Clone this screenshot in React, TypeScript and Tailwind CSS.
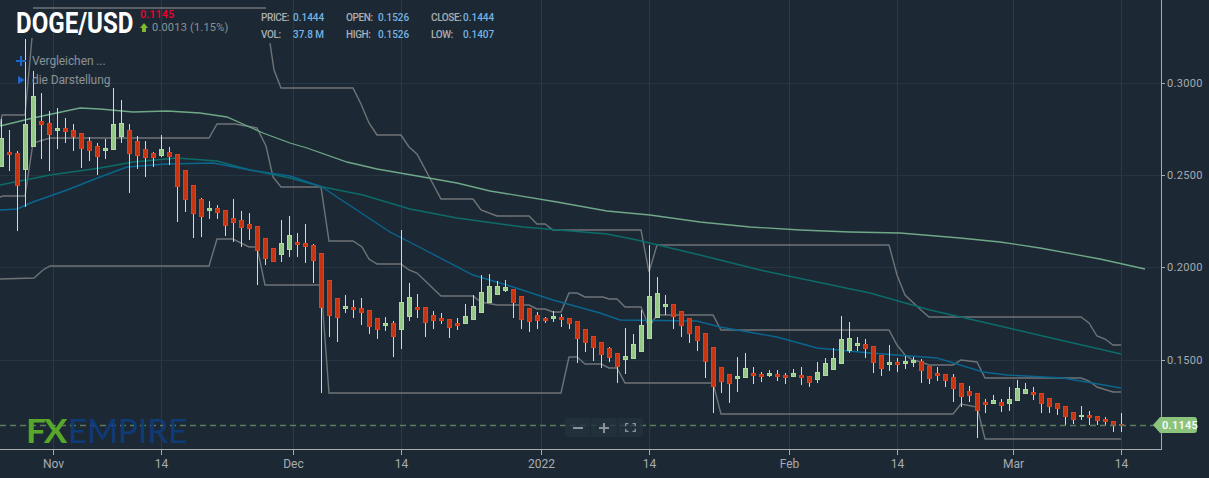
import { Fragment } from 'react';

// [high, bodyTop, bodyBottom, low, green?]
type Candle = [number, number, number, number, number];

const candles: Candle[] = [
  [119, 138, 167, 167, 1], [130, 152, 155, 171, 0], [151, 153, 186, 231, 0], [39, 124, 170, 207, 1],
  [71, 96, 147, 147, 1], [93, 121, 125, 159, 0], [111, 123, 135, 171, 0], [108, 128, 131, 149, 1],
  [118, 128, 132, 143, 0], [124, 130, 137, 151, 0], [133, 133, 149, 168, 0], [137, 141, 151, 161, 0],
  [143, 146, 157, 175, 0], [139, 148, 151, 159, 1], [88, 124, 150, 150, 1], [100, 123, 137, 143, 1],
  [124, 130, 154, 193, 0], [136, 141, 156, 169, 0], [141, 149, 158, 177, 0], [152, 153, 158, 167, 0],
  [135, 149, 156, 157, 1], [147, 152, 157, 165, 0], [154, 154, 187, 222, 0], [170, 170, 200, 212, 0],
  [185, 185, 214, 238, 0], [198, 199, 217, 237, 0], [201, 208, 211, 219, 1], [205, 208, 213, 219, 0],
  [210, 210, 226, 236, 0], [199, 218, 223, 242, 0], [211, 220, 228, 247, 0], [213, 224, 229, 240, 0],
  [226, 226, 251, 285, 0], [238, 238, 259, 265, 0], [248, 248, 262, 262, 0], [220, 243, 255, 262, 1],
  [216, 235, 250, 257, 1], [233, 242, 245, 257, 0], [224, 243, 247, 263, 0], [244, 245, 261, 283, 0],
  [253, 253, 308, 393, 0], [280, 280, 316, 337, 0], [298, 298, 318, 342, 0], [295, 306, 309, 313, 1],
  [300, 307, 310, 318, 0], [298, 308, 313, 325, 0], [310, 310, 327, 334, 0], [318, 318, 330, 339, 0],
  [317, 323, 326, 331, 1], [321, 323, 337, 357, 0], [230, 302, 330, 349, 1], [283, 297, 317, 321, 1],
  [294, 307, 310, 318, 0], [307, 307, 323, 337, 0], [311, 315, 321, 329, 0], [313, 318, 321, 324, 0],
  [319, 319, 328, 338, 0], [318, 323, 326, 330, 0], [304, 316, 324, 324, 1], [295, 306, 320, 320, 1],
  [275, 292, 313, 313, 1], [274, 286, 303, 303, 1], [281, 286, 295, 295, 1], [280, 287, 291, 292, 1],
  [289, 289, 303, 318, 0], [296, 296, 320, 329, 0], [308, 308, 322, 332, 0], [312, 315, 321, 329, 0],
  [317, 318, 321, 323, 0], [311, 316, 319, 322, 1], [314, 317, 320, 327, 0], [318, 318, 324, 329, 0],
  [321, 321, 339, 363, 0], [329, 329, 343, 352, 0], [336, 336, 348, 361, 0], [342, 342, 355, 368, 0],
  [347, 348, 358, 362, 0], [353, 353, 367, 383, 0], [328, 356, 360, 374, 1], [334, 344, 359, 359, 1],
  [310, 325, 352, 352, 1], [245, 296, 339, 339, 1], [277, 293, 318, 318, 1], [295, 304, 307, 315, 1],
  [304, 304, 317, 329, 0], [311, 311, 326, 337, 0], [318, 318, 334, 343, 0], [326, 326, 341, 351, 0],
  [333, 333, 362, 378, 0], [347, 347, 387, 413, 0], [367, 367, 382, 393, 0], [374, 374, 384, 403, 0],
  [357, 376, 379, 392, 1], [353, 368, 378, 378, 1], [367, 373, 376, 384, 0], [372, 374, 377, 382, 0],
  [370, 373, 376, 377, 1], [370, 374, 377, 381, 0], [373, 375, 378, 384, 0], [369, 373, 377, 377, 1],
  [367, 375, 378, 385, 0], [376, 376, 383, 387, 0], [362, 372, 380, 383, 1], [358, 363, 376, 376, 1],
  [348, 358, 370, 370, 1], [316, 339, 364, 364, 1], [322, 338, 351, 353, 1], [337, 343, 346, 351, 1],
  [339, 344, 349, 358, 0], [346, 346, 363, 373, 0], [355, 355, 369, 376, 0], [345, 362, 365, 371, 1],
  [358, 362, 365, 372, 0], [356, 361, 364, 369, 1], [357, 360, 363, 367, 1], [359, 361, 371, 383, 0],
  [366, 366, 379, 384, 0], [367, 373, 376, 381, 0], [374, 374, 381, 387, 0], [374, 377, 389, 402, 0],
  [383, 383, 397, 407, 0], [386, 391, 396, 402, 0], [393, 393, 411, 438, 0], [399, 402, 405, 413, 0],
  [395, 400, 404, 404, 1], [399, 402, 406, 412, 0], [387, 399, 404, 411, 1], [380, 388, 401, 401, 1],
  [383, 389, 394, 394, 1], [387, 392, 395, 400, 0], [393, 393, 404, 413, 0], [398, 398, 407, 413, 0],
  [403, 403, 409, 415, 0], [406, 406, 417, 426, 0], [412, 412, 420, 424, 0], [406, 415, 417, 420, 1],
  [411, 415, 418, 425, 0], [416, 416, 421, 425, 0], [417, 419, 422, 425, 0], [421, 421, 426, 432, 0],
  [413, 424, 426, 432, 0],
];

const grayLines = [
  '0,126 2,115 25,115 32,38',
  '0,197 3,196 25,196 33,143 50,138 209,138 217,124 235,124 257,128 266,146 273,177 281,187 321,187 329,241 353,241 362,247 369,259 377,264 401,264 409,270 417,273 441,296 473,296 481,302 497,305 529,305 537,309 545,309 553,312 561,312 569,293 577,293 585,297 603,297 609,299 617,299 625,307 641,307 649,327 657,315 713,315 721,330 889,330 897,345 905,355 913,360 921,362 929,365 953,365 961,360 977,362 985,378 1081,378 1089,381 1097,387 1113,392 1121,392',
  '0,279 34,278 43,270 50,266 209,266 217,239 233,239 249,247 257,247 265,285 321,285 329,393 561,393 569,357 577,357 585,364 601,364 609,368 617,368 625,383 713,383 721,414 953,414 961,404 977,407 985,439 1121,439',
  '33,8 266,8',
  '270,43 274,70 281,88 353,88 361,104 369,123 377,135 401,135 409,147 417,154 441,199 473,199 481,210 497,216 529,216 537,224 545,224 553,230 641,230 649,272 657,245 889,245 897,275 905,295 921,310 929,317 1081,317 1089,323 1097,336 1105,339 1113,345 1121,345',
];

const lightGreen = '0,126 33,118 80,108 100,109 133,112 167,111 200,113 227,117 263,133 290,143 307,148 347,162 377,169 423,177 457,183 490,191 557,202 607,211 650,215 700,222 750,227 800,230 850,232 900,233 960,238 1000,242 1040,248 1100,259 1145,269';
const teal = '0,185 50,175 100,168 133,162 177,158 217,161 250,170 290,178 323,187 363,195 410,209 457,218 523,227 607,234 637,240 700,255 760,270 870,293 930,310 1000,326 1060,340 1121,354';
const blue = '0,210 17,209 33,202 67,190 100,177 127,167 167,164 213,163 250,170 290,176 322,187 340,199 390,232 423,249 473,275 513,287 553,300 600,313 620,320 697,321 720,327 777,337 817,348 870,353 937,358 983,372 1007,375 1063,378 1121,388';

const gridX = [53, 161, 293, 401, 541, 649, 789, 897, 1013, 1121];
const gridY = [83, 175, 267, 360];
const dates: [number, string][] = [
  [53, 'Nov'], [161, '14'], [293, 'Dec'], [401, '14'], [541, '2022'], [649, '14'],
  [789, 'Feb'], [897, '14'], [1013, 'Mar'], [1121, '14'],
];
const prices: [number, string][] = [[83, '0.3000'], [175, '0.2500'], [267, '0.2000'], [360, '0.1500']];

const stats = [
  ['PRICE:', '0.1444', 'OPEN:', '0.1526', 'CLOSE:', '0.1444'],
  ['VOL:', '37.8 M', 'HIGH:', '0.1526', 'LOW:', '0.1407'],
];

function Chart() {
  return (
    <svg viewBox="0 0 1209 478" className="block w-[1209px] h-[478px]">
      {gridX.map(x => <line key={x} x1={x + 0.5} x2={x + 0.5} y1={0} y2={449} stroke="#2a3a46" />)}
      {gridY.map(y => <line key={y} x1={0} x2={1161} y1={y + 0.5} y2={y + 0.5} stroke="#253541" />)}

      {grayLines.map(p => <polyline key={p} points={p} fill="none" stroke="#6f7376" strokeWidth={1.4} />)}
      <polyline points={lightGreen} fill="none" stroke="#6fa886" strokeWidth={1.3} />
      <polyline points={teal} fill="none" stroke="#0c6c6a" strokeWidth={1.4} />
      <polyline points={blue} fill="none" stroke="#0a668f" strokeWidth={1.4} />

      {candles.map(([high, top, bottom, low, up], i) => {
        const x = 1 + 8 * i;
        return (
          <Fragment key={i}>
            <line x1={x + 0.5} x2={x + 0.5} y1={high} y2={low} stroke="#d5d9da" strokeWidth={1} />
            <rect
              x={x - 1.5}
              y={top + 0.5}
              width={4}
              height={Math.max(bottom - top - 1, 1)}
              fill={up ? '#96c987' : '#c8340f'}
              stroke={up ? '#afdaa0' : '#e0401c'}
              strokeWidth={1}
            />
          </Fragment>
        );
      })}

      <line x1={0} x2={1155} y1={425.5} y2={425.5} stroke="#5d7c5e" strokeWidth={1.5} strokeDasharray="6 4" />

      {/* axes */}
      <line x1={0} x2={1161} y1={449.5} y2={449.5} stroke="#a9adb0" />
      <line x1={1161.5} x2={1161.5} y1={0} y2={450} stroke="#a9adb0" />
      {gridX.map(x => <line key={x} x1={x + 0.5} x2={x + 0.5} y1={450} y2={455} stroke="#a9adb0" />)}
      {gridY.map(y => <line key={y} x1={1162} x2={1165} y1={y + 0.5} y2={y + 0.5} stroke="#a9adb0" />)}

      <path d="M1153 425 L1160 417 H1194 Q1197 417 1197 420 V430 Q1197 433 1194 433 H1160 Z" fill="#8cc47e" />
    </svg>
  );
}

export default function App() {
  return (
    <div className="relative w-[1209px] h-[478px] overflow-hidden bg-[#1c2935] font-['Roboto',sans-serif]">
      <Chart />

      {/* title */}
      <div className="absolute left-[16px] top-[8px] flex items-start">
        <div className="w-[124px] text-[29px] leading-[30px] font-bold text-white whitespace-nowrap origin-left scale-x-[0.83]">DOGE/USD</div>
        <div className="text-[11px] leading-[13px]">
          <div className="font-medium text-[#f0002d]">0.1145</div>
          <div className="flex items-center gap-[4px] text-[#8b9196] tracking-[0.2px]">
            <svg width="8" height="9" viewBox="0 0 8 9"><path d="M4 0 L8 5 H6 V9 H2 V5 H0 Z" fill="#7fb82e" /></svg>
            <span>0.0013 (1.15%)</span>
          </div>
        </div>
      </div>

      {/* ohlc */}
      <div className="absolute left-[261px] top-[12px] flex flex-col gap-[5px] text-[10px] leading-[12px] font-medium whitespace-nowrap">
        {stats.map(row => (
          <div key={row[0]} className="flex">
            <span className="w-[32px] tracking-[-0.4px] text-[#a9aeb2]">{row[0]}</span>
            <span className="w-[53px] text-[#74b3e3]">{row[1]}</span>
            <span className="w-[32px] tracking-[-0.4px] text-[#a9aeb2]">{row[2]}</span>
            <span className="w-[53px] text-[#74b3e3]">{row[3]}</span>
            <span className="w-[32px] tracking-[-0.4px] text-[#a9aeb2]">{row[4]}</span>
            <span className="text-[#74b3e3]">{row[5]}</span>
          </div>
        ))}
      </div>

      {/* chart tools */}
      <div className="absolute left-[16px] top-[54px] flex flex-col gap-[5px] text-[12px] leading-[14px] tracking-[-0.1px] text-[#8b9196]">
        <div className="flex items-center gap-[6px]">
          <svg width="10" height="10" viewBox="0 0 10 10"><path d="M4 0h2v4h4v2H6v4H4V6H0V4h4z" fill="#1f66cc" /></svg>
          <span>Vergleichen ...</span>
        </div>
        <div className="flex items-center gap-[6px]">
          <svg width="10" height="10" viewBox="0 0 10 10"><path d="M2 1 L9 5 L2 9 Z" fill="#1f66cc" /></svg>
          <span>die Darstellung</span>
        </div>
      </div>

      {/* logo */}
      <div className="absolute left-[26px] top-[413px] flex items-center text-[32px] leading-[36px] font-['Lato',sans-serif] whitespace-nowrap">
        <span className="w-[42px] font-bold text-[#58a62a] tracking-[-2px] origin-left scale-x-[1.1]">FX</span>
        <span className="text-[#0f3a78] origin-left scale-x-[1.04]">EMPIRE</span>
      </div>

      {/* zoom controls */}
      <div className="absolute left-[565px] top-[418px] w-[78px] h-[19px] flex items-center rounded-[3px] bg-[#24323e]/80 text-[#8a939a]">
        <div className="flex-1 h-full flex items-center justify-center border-r border-[#1c2935]">
          <svg width="10" height="10" viewBox="0 0 10 10"><path d="M0 4h10v2H0z" fill="currentColor" /></svg>
        </div>
        <div className="flex-1 h-full flex items-center justify-center border-r border-[#1c2935]">
          <svg width="10" height="10" viewBox="0 0 10 10"><path d="M4 0h2v4h4v2H6v4H4V6H0V4h4z" fill="currentColor" /></svg>
        </div>
        <div className="flex-1 h-full flex items-center justify-center">
          <svg width="11" height="9" viewBox="0 0 11 9" fill="none" stroke="currentColor" strokeWidth="1.3"><path d="M3.5 .7H.7v2.5M7.5 .7h2.8v2.5M.7 5.8v2.5h2.8M10.3 5.8v2.5H7.5" /></svg>
        </div>
      </div>

      {/* axis labels */}
      {dates.map(([x, label]) => (
        <div key={x} className="absolute top-[457px] w-[40px] -ml-[20px] text-center text-[12px] leading-[14px] text-[#a7acb0]" style={{ left: x + 0.5 }}>{label}</div>
      ))}
      {prices.map(([y, label]) => (
        <div key={y} className="absolute left-[1167px] text-[11px] leading-[12px] text-[#a7acb0] tracking-[0.3px]" style={{ top: y - 5 }}>{label}</div>
      ))}
      <div className="absolute left-[1162px] top-[419px] text-[11px] leading-[14px] font-medium text-white tracking-[0.3px]">0.1145</div>
    </div>
  );
}
